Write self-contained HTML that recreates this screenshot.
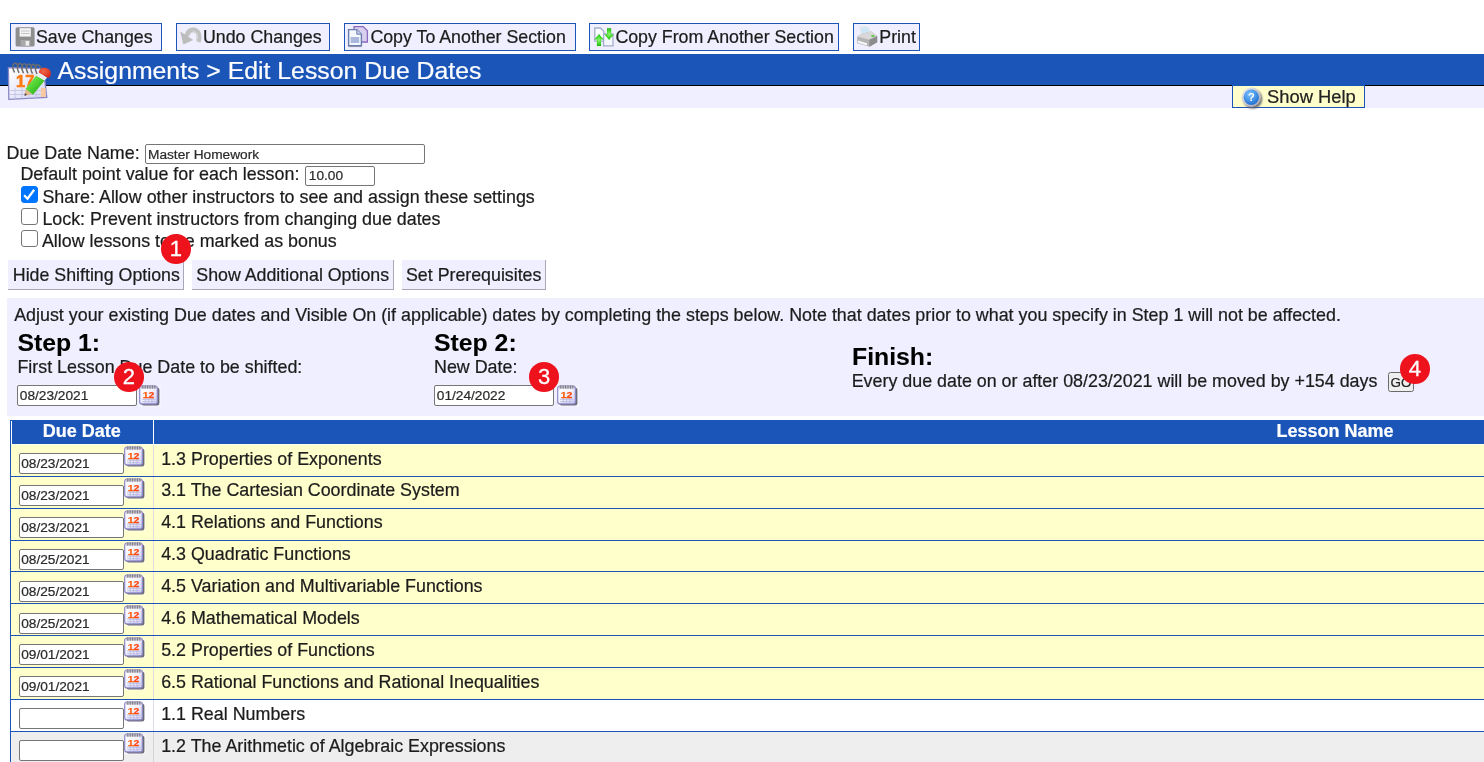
<!DOCTYPE html>
<html><head><meta charset="utf-8"><title>Edit Lesson Due Dates</title>
<style>
html,body{margin:0;padding:0;}
body{width:1484px;height:762px;overflow:hidden;background:#fff;position:relative;will-change:transform;font-family:"Liberation Sans",Arial,sans-serif;font-size:17.875px;color:#1c1c1c;-webkit-text-stroke-width:.22px;}
.a{position:absolute;white-space:nowrap;line-height:20px;}
.tb{position:absolute;top:23px;height:26px;border:1px solid #1b55b8;background:#efefff;}
.tb span{position:absolute;top:3px;font-size:17.8px;line-height:20px;white-space:nowrap;color:#1c1c1c;}
.tb svg{position:absolute;left:0;top:0;overflow:visible;}
#bar{position:absolute;left:0;top:54px;width:1484px;height:31px;background:#1b55b8;border-bottom:1px solid #000;}
#bar2{position:absolute;left:0;top:86px;width:1484px;height:22px;background:#efefff;}
#title{position:absolute;left:57.5px;top:57px;font-size:24.8px;line-height:28px;color:#fff;white-space:nowrap;}
.inp{position:absolute;box-sizing:border-box;border:1px solid #767676;border-radius:2px;background:#fff;font-size:13.7px;line-height:16px;padding:2px 0 0 1.2px;white-space:nowrap;color:#2a2a2a;height:20.5px;}
.btn{position:absolute;top:260px;height:30px;box-sizing:border-box;background:#efefff;border-right:1px solid #a8a8b4;border-bottom:1px solid #a8a8b4;font-size:17.8px;line-height:20px;padding-top:5px;white-space:nowrap;}
.cb{position:absolute;width:16.5px;height:16.5px;box-sizing:border-box;border:1.3px solid #767676;border-radius:3px;background:#fff;}
.badge{position:absolute;width:30.500px;height:30px;border-radius:50%;background:#ee121c;color:#fff;font-size:22px;line-height:29.600px;text-align:center;-webkit-text-stroke:.3px #fff;}
#shift{position:absolute;left:7px;top:298px;width:1477px;height:118px;background:#efefff;}
.h{font-weight:bold;font-size:24.8px;line-height:28px;color:#000;-webkit-text-stroke-width:.08px;}
#tbl{position:absolute;left:10px;top:420px;width:1474px;height:342px;background:#1b55b8;}
.c{position:absolute;}
.th{position:absolute;color:#fff;font-weight:bold;font-size:18px;line-height:20px;white-space:nowrap;}
.rt{position:absolute;left:161.2px;line-height:20px;white-space:nowrap;font-size:17.86px;color:#1c1c1c;}
.cal{position:absolute;overflow:visible;}
</style></head><body>

<svg width="0" height="0" style="position:absolute">
<defs>
<linearGradient id="cg" x1="0" y1="0" x2="1" y2="1"><stop offset="0" stop-color="#ffffff"/><stop offset=".45" stop-color="#f4f4ff"/><stop offset="1" stop-color="#ccccf2"/></linearGradient>
<filter id="sh" x="-20%" y="-20%" width="150%" height="150%"><feGaussianBlur stdDeviation="0.7"/></filter>
<linearGradient id="og" x1="0" y1="0" x2="1" y2="0"><stop offset="0" stop-color="#ff7410"/><stop offset="1" stop-color="#ff3410"/></linearGradient>
</defs></svg>

<div class="tb" style="left:10px;width:150px;"><svg width="26" height="26"><g transform="translate(-11,-24)">
<rect x="15.6" y="27.2" width="19" height="19.4" rx="1.5" fill="#8e8e8e"/>
<rect x="19.6" y="28.2" width="11.2" height="8.4" fill="#f4f4f4"/>
<path d="M21 31h8.5M21 33.5h8.5" stroke="#c4c4c4" stroke-width="1"/>
<rect x="20.6" y="40" width="9.6" height="6.6" fill="#a9a9a9"/>
<rect x="25.6" y="41" width="3.6" height="4.6" fill="#f0f0f0"/>
</g></svg><span id="tb0" style="left:25px;">Save Changes</span></div>
<div class="tb" style="left:176px;width:152px;"><svg width="26" height="26"><g transform="translate(-177,-24)">
<path d="M198.200 41.800 C200.800 35 197.600 29.600 192.600 29.900 C189.600 30.100 187.800 32.500 186.600 36" fill="none" stroke="#c2c2c2" stroke-width="4.800"/>
<path d="M180.300 31.400 L193.200 40 L183.300 44.600 Z" fill="#bcbcbc"/>
<path d="M196.600 41 C198.600 35.500 196.500 31.600 192.600 31.600" fill="none" stroke="#d8d8d8" stroke-width="1.400"/>
</g></svg><span id="tb1" style="left:26px;">Undo Changes</span></div>
<div class="tb" style="left:344px;width:230px;"><svg width="26" height="26"><g transform="translate(-345,-24)">
<path d="M354 26.6h9.2l4.2 4.2v11.2h-13.4z" fill="#d9d0f0" stroke="#8a68c0" stroke-width="1.3"/>
<path d="M348.6 29.6h8.2l4.6 4.6v11.4h-12.8z" fill="#f4f8ff" stroke="#6a7cab" stroke-width="1.4"/>
<rect x="350.6" y="37" width="8.6" height="6" fill="#a9b8dc"/>
<path d="M356.8 29.6v4.6h4.6" fill="#c4d0ec" stroke="#6a7cab" stroke-width="1"/>
<path d="M348.4 46.6h13.2" stroke="#5a607c" stroke-width="1" opacity=".6"/>
</g></svg><span id="tb2" style="left:25.4px;">Copy To Another Section</span></div>
<div class="tb" style="left:589px;width:248px;"><svg width="26" height="26"><defs><radialGradient id="gg" cx=".5" cy=".5" r=".6"><stop offset="0" stop-color="#90f870"/><stop offset=".6" stop-color="#38d020"/><stop offset="1" stop-color="#109808"/></radialGradient></defs><g transform="translate(-590,-24)">
<path d="M594.800 28h5.600l3.400 3.400v9.800h-9z" fill="#fafcff" stroke="#a4aecb" stroke-width="1.300"/>
<path d="M603.600 34h9.400v11.800h-9.400z" fill="#f4f8fc" stroke="#a4aecb" stroke-width="1.300"/>
<path d="M599 34l4.600 5.600h-2.500v6.400h-4.200v-6.400h-2.500z" fill="url(#gg)"/>
<path d="M609.100 40l-4.600-5.600h2.500v-6.200h4.200v6.200h2.500z" fill="url(#gg)"/>
</g></svg><span id="tb3" style="left:25.4px;">Copy From Another Section</span></div>
<div class="tb" style="left:853px;width:65px;"><svg width="26" height="26"><g transform="translate(-854,-24)">
<path d="M859.5 27.2l7.8-.8 4 6.4-9 2.6z" fill="#cfe6f8" stroke="#e8e8e8" stroke-width="1.2"/>
<path d="M857.2 36.4l4.6-2.6 9.6-2.4 5.8 4.6v6.2l-7.6 4.6-12.4-3.6z" fill="#b4b4b4"/>
<path d="M857.2 36.4l12.2 3.4 7.8-3.8-5.8-4.6-9.6 2.4z" fill="#d8d8d8"/>
<path d="M858 40.6l9 2.6v2.2l-9-2.6z" fill="#f6f6f6"/>
<path d="M869.4 39.8v7l7.8-4.6v-6.2z" fill="#8c8c8c"/>
<rect x="871.4" y="35.2" width="3" height="1.6" fill="#48c030"/>
</g></svg><span id="tb4" style="left:25.3px;">Print</span></div>
<div id="bar"></div><div id="bar2"></div>
<div id="title">Assignments &gt; Edit Lesson Due Dates</div>
<svg class="cal" style="left:6px;top:60px" width="48" height="42" viewBox="6 60 48 42">
<defs><linearGradient id="tg" x1="0" y1="0" x2="1" y2="1"><stop offset="0" stop-color="#ffffff"/><stop offset="1" stop-color="#d4d4f4"/></linearGradient>
<linearGradient id="pg" x1="0" y1="0" x2="1" y2="1"><stop offset="0" stop-color="#90f468"/><stop offset=".5" stop-color="#4cd030"/><stop offset="1" stop-color="#1c9810"/></linearGradient>
<radialGradient id="eg" cx=".4" cy=".35" r=".7"><stop offset="0" stop-color="#f06848"/><stop offset="1" stop-color="#d82818"/></radialGradient></defs>
<path d="M8.4 67.600l35 1 3.400 28.800-38 2z" fill="url(#tg)" stroke="#8a88c4" stroke-width="1.300"/>
<path d="M9 90.500h37M9.200 94.500h37M15 88v10.500M22 88v10.500M29 88v10.500M36 88v10.500" stroke="#c4c4e4" stroke-width=".9"/>
<rect x="41" y="88" width="4.600" height="9" fill="#f8c8a0"/>
<text x="16" y="87.200" font-family="Liberation Sans, Arial, sans-serif" font-weight="bold" font-size="16.500" fill="#ff7c14" stroke="#ff7c14" stroke-width=".7">17</text>
<g fill="none" stroke="#6c6c6c" stroke-width="1.500"><path d="M14.500 72.500c-4.500-9 2-13 4-5M19 72.800c-4.500-9 2-13 4-5M23.500 73.100c-4.500-9 2-13 4-5M28 73.400c-4.500-9 2-13 4-5M32.500 73.700c-4.500-9 2-13 4-5M37 74c-4.500-9 2-13 4-5"/></g>
<path d="M24.400 95.800l1.400-7 6 5.400z" fill="#e4b888"/><path d="M24.400 95.800l.6-2.800 2 2z" fill="#3c3c3c"/>
<path d="M25.600 88.800l10.600-13.200 8.400 4.800-11.600 14.400z" fill="url(#pg)"/>
<path d="M36.200 75.600l2.600-3 8.400 5-2.600 2.800z" fill="#ececec"/>
<path d="M38.800 72.600c0-7 12.500-6.500 12 1.500-.2 3.200-1.800 3.800-3.600 3.500z" fill="url(#eg)"/>
</svg>
<div class="a" style="left:1232px;top:85px;width:131px;height:21px;background:#ffffcc;border:1px solid #1b55b8;"></div>
<svg class="cal" style="left:1240px;top:85.800px" width="24" height="24" viewBox="0 0 24 24">
<defs><radialGradient id="hg" cx=".4" cy=".3" r=".8"><stop offset="0" stop-color="#7cc4ff"/><stop offset="1" stop-color="#1868d0"/></radialGradient>
<linearGradient id="hr" x1="0" y1="0" x2="1" y2="1"><stop offset="0" stop-color="#f0f0f2"/><stop offset="1" stop-color="#a4a4ac"/></linearGradient>
<filter id="hs" x="-30%" y="-30%" width="160%" height="160%"><feGaussianBlur stdDeviation="0.900"/></filter></defs>
<circle cx="12.800" cy="13" r="9.400" fill="#66666e" filter="url(#hs)"/>
<circle cx="11.300" cy="11.200" r="9.700" fill="url(#hr)"/>
<circle cx="11.300" cy="11.200" r="7.700" fill="url(#hg)"/>
<text x="11.300" y="15.200" text-anchor="middle" font-family="Liberation Sans, Arial, sans-serif" font-weight="bold" font-size="11" fill="#fff">?</text>
</svg>
<div class="a" id="showhelp" style="left:1267.1px;top:86.6px;font-size:18.35px;color:#222;">Show Help</div>
<div class="a" id="t_ddn" style="left:6.6px;top:143px;">Due Date Name:</div>
<div class="inp" id="i_name" style="left:145px;top:144px;width:280px;height:20px;padding-left:2px">Master Homework</div>
<div class="a" id="t_def" style="left:20.4px;top:164px;">Default point value for each lesson:</div>
<div class="inp" id="i_pts" style="left:305px;top:166px;width:70px;height:20px;padding:1px 0 0 2.8px">10.00</div>
<div class="cb" style="left:21px;top:186px;background:#0075ff;border-color:#0075ff;"><svg width="17" height="17" style="position:absolute;left:-1.3px;top:-1.3px"><path d="M3.100 9.300L6.500 12.800L13.200 3.700" fill="none" stroke="#fff" stroke-width="2.300"/></svg></div>
<div class="a" id="t_share" style="left:42.4px;top:187px;">Share: Allow other instructors to see and assign these settings</div>
<div class="cb" style="left:21px;top:208px;"></div>
<div class="a" id="t_lock" style="left:42.4px;top:209px;">Lock: Prevent instructors from changing due dates</div>
<div class="cb" style="left:21px;top:230px;"></div>
<div class="a" id="t_allow" style="left:41.9px;top:231px;">Allow lessons to be marked as bonus</div>
<div class="btn" id="b1" style="left:8px;width:176px;padding-left:4.800px;">Hide Shifting Options</div>
<div class="btn" id="b2" style="left:192px;width:202px;padding-left:4.300px;">Show Additional Options</div>
<div class="btn" id="b3" style="left:402px;width:144px;padding-left:4px;">Set Prerequisites</div>
<div id="shift"></div>
<div class="a" id="t_adj" style="left:14.2px;top:305px;">Adjust your existing Due dates and Visible On (if applicable) dates by completing the steps below. Note that dates prior to what you specify in Step 1 will not be affected.</div>
<div class="a h" id="t_s1" style="left:17.4px;top:329px;">Step 1:</div>
<div class="a" id="t_first" style="left:17.4px;top:356.500px;">First Lesson Due Date to be shifted:</div>
<div class="inp" id="i_s1" style="left:17px;top:385px;width:120px;padding-left:1.8px">08/23/2021</div>
<svg class="cal" style="left:139px;top:384.5px" width="24" height="24" viewBox="0 0 24 24"><rect x="0" y="0.5" width="22" height="21.5" fill="#fff" opacity=".3"/>
<rect x="2.4" y="2.4" width="18" height="18.2" rx="2.5" fill="#6c6c78" filter="url(#sh)"/>
<rect x="0.7" y="1" width="17.6" height="17.9" rx="2.2" fill="url(#cg)" stroke="#8c88c8" stroke-width="1.2"/>
<rect x="2" y="0.8" width="15.2" height="2.8" fill="#b4b2c0" opacity=".8"/>
<path d="M3.8 0.3v3.4M6.2 0.3v3.4M8.6 0.3v3.4M11 0.3v3.4M13.4 0.3v3.4M15.8 0.3v3.4" stroke="#5c5c66" stroke-width="0.7"/>
<path d="M3 14.3h13.4M3 16.7h13.400M6.3 13.3v5M9.6 13.3v5M12.9 13.3v5" stroke="#b8b8e0" stroke-width="0.8"/>
<text x="9.6" y="12.8" text-anchor="middle" font-family="Liberation Sans, Arial, sans-serif" font-weight="bold" font-size="9.2" fill="url(#og)" stroke="#ff5410" stroke-width=".25" textLength="11.5" lengthAdjust="spacingAndGlyphs">12</text></svg>
<div class="a h" id="t_s2" style="left:434px;top:329px;">Step 2:</div>
<div class="a" id="t_new" style="left:434px;top:356.500px;">New Date:</div>
<div class="inp" id="i_s2" style="left:434px;top:385px;width:120px;padding-left:1.8px">01/24/2022</div>
<svg class="cal" style="left:556.5px;top:384.5px" width="24" height="24" viewBox="0 0 24 24"><rect x="0" y="0.5" width="22" height="21.5" fill="#fff" opacity=".3"/>
<rect x="2.4" y="2.4" width="18" height="18.2" rx="2.5" fill="#6c6c78" filter="url(#sh)"/>
<rect x="0.7" y="1" width="17.6" height="17.9" rx="2.2" fill="url(#cg)" stroke="#8c88c8" stroke-width="1.2"/>
<rect x="2" y="0.8" width="15.2" height="2.8" fill="#b4b2c0" opacity=".8"/>
<path d="M3.8 0.3v3.4M6.2 0.3v3.4M8.6 0.3v3.4M11 0.3v3.4M13.4 0.3v3.4M15.8 0.3v3.4" stroke="#5c5c66" stroke-width="0.7"/>
<path d="M3 14.3h13.4M3 16.7h13.400M6.3 13.3v5M9.6 13.3v5M12.9 13.3v5" stroke="#b8b8e0" stroke-width="0.8"/>
<text x="9.6" y="12.8" text-anchor="middle" font-family="Liberation Sans, Arial, sans-serif" font-weight="bold" font-size="9.2" fill="url(#og)" stroke="#ff5410" stroke-width=".25" textLength="11.5" lengthAdjust="spacingAndGlyphs">12</text></svg>
<div class="a h" id="t_fin" style="left:852px;top:343px;">Finish:</div>
<div class="a" id="t_every" style="left:851.700px;top:370.500px;">Every due date on or after 08/23/2021 will be moved by +154 days</div>
<div class="a" id="go" style="left:1388px;top:372px;width:26px;height:20px;box-sizing:border-box;border:1px solid #6a6a6a;border-radius:2.500px;background:#efefef;font-size:13.400px;line-height:19.400px;text-align:center;color:#222;">GO</div>
<div id="tbl"></div>
<div class="c" style="left:11px;top:421px;width:1px;height:23px;background:#fff"></div>
<div class="c" style="left:153px;top:420px;width:1px;height:24px;background:#fff"></div>
<div class="th" id="th1" style="left:42.800px;top:420.500px;">Due Date</div>
<div class="th" id="th2" style="left:1276.400px;top:420.500px;">Lesson Name</div>
<div class="c" style="left:11px;top:444px;width:1473px;height:32px;background:#ffffcc"></div>
<div class="c" style="left:153px;top:444px;width:1px;height:32px;background:#e2dce0"></div>
<div class="inp" id="ir0" style="left:19px;top:453px;width:105px;">08/23/2021</div>
<svg class="cal" style="left:124px;top:445.9px" width="24" height="24" viewBox="0 0 24 24"><rect x="0" y="0.5" width="22" height="21.5" fill="#fff" opacity=".3"/>
<rect x="2.4" y="2.4" width="18" height="18.2" rx="2.5" fill="#6c6c78" filter="url(#sh)"/>
<rect x="0.7" y="1" width="17.6" height="17.9" rx="2.2" fill="url(#cg)" stroke="#8c88c8" stroke-width="1.2"/>
<rect x="2" y="0.8" width="15.2" height="2.8" fill="#b4b2c0" opacity=".8"/>
<path d="M3.8 0.3v3.4M6.2 0.3v3.4M8.6 0.3v3.4M11 0.3v3.4M13.4 0.3v3.4M15.8 0.3v3.4" stroke="#5c5c66" stroke-width="0.7"/>
<path d="M3 14.3h13.4M3 16.7h13.400M6.3 13.3v5M9.6 13.3v5M12.9 13.3v5" stroke="#b8b8e0" stroke-width="0.8"/>
<text x="9.6" y="12.8" text-anchor="middle" font-family="Liberation Sans, Arial, sans-serif" font-weight="bold" font-size="9.2" fill="url(#og)" stroke="#ff5410" stroke-width=".25" textLength="11.5" lengthAdjust="spacingAndGlyphs">12</text></svg>
<div class="rt" id="r0" style="top:449px;">1.3 Properties of Exponents</div>
<div class="c" style="left:11px;top:477px;width:1473px;height:31px;background:#ffffcc"></div>
<div class="c" style="left:153px;top:477px;width:1px;height:31px;background:#e2dce0"></div>
<div class="inp" id="ir1" style="left:19px;top:485px;width:105px;">08/23/2021</div>
<svg class="cal" style="left:124px;top:477.8px" width="24" height="24" viewBox="0 0 24 24"><rect x="0" y="0.5" width="22" height="21.5" fill="#fff" opacity=".3"/>
<rect x="2.4" y="2.4" width="18" height="18.2" rx="2.5" fill="#6c6c78" filter="url(#sh)"/>
<rect x="0.7" y="1" width="17.6" height="17.9" rx="2.2" fill="url(#cg)" stroke="#8c88c8" stroke-width="1.2"/>
<rect x="2" y="0.8" width="15.2" height="2.8" fill="#b4b2c0" opacity=".8"/>
<path d="M3.8 0.3v3.4M6.2 0.3v3.4M8.6 0.3v3.4M11 0.3v3.4M13.4 0.3v3.4M15.8 0.3v3.4" stroke="#5c5c66" stroke-width="0.7"/>
<path d="M3 14.3h13.4M3 16.7h13.400M6.3 13.3v5M9.6 13.3v5M12.9 13.3v5" stroke="#b8b8e0" stroke-width="0.8"/>
<text x="9.6" y="12.8" text-anchor="middle" font-family="Liberation Sans, Arial, sans-serif" font-weight="bold" font-size="9.2" fill="url(#og)" stroke="#ff5410" stroke-width=".25" textLength="11.5" lengthAdjust="spacingAndGlyphs">12</text></svg>
<div class="rt" id="r1" style="top:480px;">3.1 The Cartesian Coordinate System</div>
<div class="c" style="left:11px;top:509px;width:1473px;height:31px;background:#ffffcc"></div>
<div class="c" style="left:153px;top:509px;width:1px;height:31px;background:#e2dce0"></div>
<div class="inp" id="ir2" style="left:19px;top:517px;width:105px;">08/23/2021</div>
<svg class="cal" style="left:124px;top:509.7px" width="24" height="24" viewBox="0 0 24 24"><rect x="0" y="0.5" width="22" height="21.5" fill="#fff" opacity=".3"/>
<rect x="2.4" y="2.4" width="18" height="18.2" rx="2.5" fill="#6c6c78" filter="url(#sh)"/>
<rect x="0.7" y="1" width="17.6" height="17.9" rx="2.2" fill="url(#cg)" stroke="#8c88c8" stroke-width="1.2"/>
<rect x="2" y="0.8" width="15.2" height="2.8" fill="#b4b2c0" opacity=".8"/>
<path d="M3.8 0.3v3.4M6.2 0.3v3.4M8.6 0.3v3.4M11 0.3v3.4M13.4 0.3v3.4M15.8 0.3v3.4" stroke="#5c5c66" stroke-width="0.7"/>
<path d="M3 14.3h13.4M3 16.7h13.400M6.3 13.3v5M9.6 13.3v5M12.9 13.3v5" stroke="#b8b8e0" stroke-width="0.8"/>
<text x="9.6" y="12.8" text-anchor="middle" font-family="Liberation Sans, Arial, sans-serif" font-weight="bold" font-size="9.2" fill="url(#og)" stroke="#ff5410" stroke-width=".25" textLength="11.5" lengthAdjust="spacingAndGlyphs">12</text></svg>
<div class="rt" id="r2" style="top:512px;">4.1 Relations and Functions</div>
<div class="c" style="left:11px;top:541px;width:1473px;height:30px;background:#ffffcc"></div>
<div class="c" style="left:153px;top:541px;width:1px;height:30px;background:#e2dce0"></div>
<div class="inp" id="ir3" style="left:19px;top:549px;width:105px;">08/25/2021</div>
<svg class="cal" style="left:124px;top:541.6px" width="24" height="24" viewBox="0 0 24 24"><rect x="0" y="0.5" width="22" height="21.5" fill="#fff" opacity=".3"/>
<rect x="2.4" y="2.4" width="18" height="18.2" rx="2.5" fill="#6c6c78" filter="url(#sh)"/>
<rect x="0.7" y="1" width="17.6" height="17.9" rx="2.2" fill="url(#cg)" stroke="#8c88c8" stroke-width="1.2"/>
<rect x="2" y="0.8" width="15.2" height="2.8" fill="#b4b2c0" opacity=".8"/>
<path d="M3.8 0.3v3.4M6.2 0.3v3.4M8.6 0.3v3.4M11 0.3v3.4M13.4 0.3v3.4M15.8 0.3v3.4" stroke="#5c5c66" stroke-width="0.7"/>
<path d="M3 14.3h13.4M3 16.7h13.400M6.3 13.3v5M9.6 13.3v5M12.9 13.3v5" stroke="#b8b8e0" stroke-width="0.8"/>
<text x="9.6" y="12.8" text-anchor="middle" font-family="Liberation Sans, Arial, sans-serif" font-weight="bold" font-size="9.2" fill="url(#og)" stroke="#ff5410" stroke-width=".25" textLength="11.5" lengthAdjust="spacingAndGlyphs">12</text></svg>
<div class="rt" id="r3" style="top:544px;">4.3 Quadratic Functions</div>
<div class="c" style="left:11px;top:572px;width:1473px;height:31px;background:#ffffcc"></div>
<div class="c" style="left:153px;top:572px;width:1px;height:31px;background:#e2dce0"></div>
<div class="inp" id="ir4" style="left:19px;top:581px;width:105px;">08/25/2021</div>
<svg class="cal" style="left:124px;top:573.5px" width="24" height="24" viewBox="0 0 24 24"><rect x="0" y="0.5" width="22" height="21.5" fill="#fff" opacity=".3"/>
<rect x="2.4" y="2.4" width="18" height="18.2" rx="2.5" fill="#6c6c78" filter="url(#sh)"/>
<rect x="0.7" y="1" width="17.6" height="17.9" rx="2.2" fill="url(#cg)" stroke="#8c88c8" stroke-width="1.2"/>
<rect x="2" y="0.8" width="15.2" height="2.8" fill="#b4b2c0" opacity=".8"/>
<path d="M3.8 0.3v3.4M6.2 0.3v3.4M8.6 0.3v3.4M11 0.3v3.4M13.4 0.3v3.4M15.8 0.3v3.4" stroke="#5c5c66" stroke-width="0.7"/>
<path d="M3 14.3h13.4M3 16.7h13.400M6.3 13.3v5M9.6 13.3v5M12.9 13.3v5" stroke="#b8b8e0" stroke-width="0.8"/>
<text x="9.6" y="12.8" text-anchor="middle" font-family="Liberation Sans, Arial, sans-serif" font-weight="bold" font-size="9.2" fill="url(#og)" stroke="#ff5410" stroke-width=".25" textLength="11.5" lengthAdjust="spacingAndGlyphs">12</text></svg>
<div class="rt" id="r4" style="top:576px;">4.5 Variation and Multivariable Functions</div>
<div class="c" style="left:11px;top:604px;width:1473px;height:31px;background:#ffffcc"></div>
<div class="c" style="left:153px;top:604px;width:1px;height:31px;background:#e2dce0"></div>
<div class="inp" id="ir5" style="left:19px;top:613px;width:105px;">08/25/2021</div>
<svg class="cal" style="left:124px;top:605.4px" width="24" height="24" viewBox="0 0 24 24"><rect x="0" y="0.5" width="22" height="21.5" fill="#fff" opacity=".3"/>
<rect x="2.4" y="2.4" width="18" height="18.2" rx="2.5" fill="#6c6c78" filter="url(#sh)"/>
<rect x="0.7" y="1" width="17.6" height="17.9" rx="2.2" fill="url(#cg)" stroke="#8c88c8" stroke-width="1.2"/>
<rect x="2" y="0.8" width="15.2" height="2.8" fill="#b4b2c0" opacity=".8"/>
<path d="M3.8 0.3v3.4M6.2 0.3v3.4M8.6 0.3v3.4M11 0.3v3.4M13.4 0.3v3.4M15.8 0.3v3.4" stroke="#5c5c66" stroke-width="0.7"/>
<path d="M3 14.3h13.4M3 16.7h13.400M6.3 13.3v5M9.6 13.3v5M12.9 13.3v5" stroke="#b8b8e0" stroke-width="0.8"/>
<text x="9.6" y="12.8" text-anchor="middle" font-family="Liberation Sans, Arial, sans-serif" font-weight="bold" font-size="9.2" fill="url(#og)" stroke="#ff5410" stroke-width=".25" textLength="11.5" lengthAdjust="spacingAndGlyphs">12</text></svg>
<div class="rt" id="r5" style="top:608px;">4.6 Mathematical Models</div>
<div class="c" style="left:11px;top:636px;width:1473px;height:31px;background:#ffffcc"></div>
<div class="c" style="left:153px;top:636px;width:1px;height:31px;background:#e2dce0"></div>
<div class="inp" id="ir6" style="left:19px;top:644px;width:105px;">09/01/2021</div>
<svg class="cal" style="left:124px;top:637.3px" width="24" height="24" viewBox="0 0 24 24"><rect x="0" y="0.5" width="22" height="21.5" fill="#fff" opacity=".3"/>
<rect x="2.4" y="2.4" width="18" height="18.2" rx="2.5" fill="#6c6c78" filter="url(#sh)"/>
<rect x="0.7" y="1" width="17.6" height="17.9" rx="2.2" fill="url(#cg)" stroke="#8c88c8" stroke-width="1.2"/>
<rect x="2" y="0.8" width="15.2" height="2.8" fill="#b4b2c0" opacity=".8"/>
<path d="M3.8 0.3v3.4M6.2 0.3v3.4M8.6 0.3v3.4M11 0.3v3.4M13.4 0.3v3.4M15.8 0.3v3.4" stroke="#5c5c66" stroke-width="0.7"/>
<path d="M3 14.3h13.4M3 16.7h13.400M6.3 13.3v5M9.6 13.3v5M12.9 13.3v5" stroke="#b8b8e0" stroke-width="0.8"/>
<text x="9.6" y="12.8" text-anchor="middle" font-family="Liberation Sans, Arial, sans-serif" font-weight="bold" font-size="9.2" fill="url(#og)" stroke="#ff5410" stroke-width=".25" textLength="11.5" lengthAdjust="spacingAndGlyphs">12</text></svg>
<div class="rt" id="r6" style="top:640px;">5.2 Properties of Functions</div>
<div class="c" style="left:11px;top:668px;width:1473px;height:31px;background:#ffffcc"></div>
<div class="c" style="left:153px;top:668px;width:1px;height:31px;background:#e2dce0"></div>
<div class="inp" id="ir7" style="left:19px;top:676px;width:105px;">09/01/2021</div>
<svg class="cal" style="left:124px;top:669.2px" width="24" height="24" viewBox="0 0 24 24"><rect x="0" y="0.5" width="22" height="21.5" fill="#fff" opacity=".3"/>
<rect x="2.4" y="2.4" width="18" height="18.2" rx="2.5" fill="#6c6c78" filter="url(#sh)"/>
<rect x="0.7" y="1" width="17.6" height="17.9" rx="2.2" fill="url(#cg)" stroke="#8c88c8" stroke-width="1.2"/>
<rect x="2" y="0.8" width="15.2" height="2.8" fill="#b4b2c0" opacity=".8"/>
<path d="M3.8 0.3v3.4M6.2 0.3v3.4M8.6 0.3v3.4M11 0.3v3.4M13.4 0.3v3.4M15.8 0.3v3.4" stroke="#5c5c66" stroke-width="0.7"/>
<path d="M3 14.3h13.4M3 16.7h13.400M6.3 13.3v5M9.6 13.3v5M12.9 13.3v5" stroke="#b8b8e0" stroke-width="0.8"/>
<text x="9.6" y="12.8" text-anchor="middle" font-family="Liberation Sans, Arial, sans-serif" font-weight="bold" font-size="9.2" fill="url(#og)" stroke="#ff5410" stroke-width=".25" textLength="11.5" lengthAdjust="spacingAndGlyphs">12</text></svg>
<div class="rt" id="r7" style="top:672px;">6.5 Rational Functions and Rational Inequalities</div>
<div class="c" style="left:11px;top:700px;width:1473px;height:31px;background:#ffffff"></div>
<div class="c" style="left:153px;top:700px;width:1px;height:31px;background:#dcdce4"></div>
<div class="inp" id="ir8" style="left:19px;top:708px;width:105px;"></div>
<svg class="cal" style="left:124px;top:701.1px" width="24" height="24" viewBox="0 0 24 24"><rect x="0" y="0.5" width="22" height="21.5" fill="#fff" opacity=".3"/>
<rect x="2.4" y="2.4" width="18" height="18.2" rx="2.5" fill="#6c6c78" filter="url(#sh)"/>
<rect x="0.7" y="1" width="17.6" height="17.9" rx="2.2" fill="url(#cg)" stroke="#8c88c8" stroke-width="1.2"/>
<rect x="2" y="0.8" width="15.2" height="2.8" fill="#b4b2c0" opacity=".8"/>
<path d="M3.8 0.3v3.4M6.2 0.3v3.4M8.6 0.3v3.4M11 0.3v3.4M13.4 0.3v3.4M15.8 0.3v3.4" stroke="#5c5c66" stroke-width="0.7"/>
<path d="M3 14.3h13.4M3 16.7h13.400M6.3 13.3v5M9.6 13.3v5M12.9 13.3v5" stroke="#b8b8e0" stroke-width="0.8"/>
<text x="9.6" y="12.8" text-anchor="middle" font-family="Liberation Sans, Arial, sans-serif" font-weight="bold" font-size="9.2" fill="url(#og)" stroke="#ff5410" stroke-width=".25" textLength="11.5" lengthAdjust="spacingAndGlyphs">12</text></svg>
<div class="rt" id="r8" style="top:704px;">1.1 Real Numbers</div>
<div class="c" style="left:11px;top:732px;width:1473px;height:31px;background:#eeeeee"></div>
<div class="c" style="left:153px;top:732px;width:1px;height:31px;background:#d4d4d8"></div>
<div class="inp" id="ir9" style="left:19px;top:740px;width:105px;"></div>
<svg class="cal" style="left:124px;top:733px" width="24" height="24" viewBox="0 0 24 24"><rect x="0" y="0.5" width="22" height="21.5" fill="#fff" opacity=".3"/>
<rect x="2.4" y="2.4" width="18" height="18.2" rx="2.5" fill="#6c6c78" filter="url(#sh)"/>
<rect x="0.7" y="1" width="17.6" height="17.9" rx="2.2" fill="url(#cg)" stroke="#8c88c8" stroke-width="1.2"/>
<rect x="2" y="0.8" width="15.2" height="2.8" fill="#b4b2c0" opacity=".8"/>
<path d="M3.8 0.3v3.4M6.2 0.3v3.4M8.6 0.3v3.4M11 0.3v3.4M13.4 0.3v3.4M15.8 0.3v3.4" stroke="#5c5c66" stroke-width="0.7"/>
<path d="M3 14.3h13.4M3 16.7h13.400M6.3 13.3v5M9.6 13.3v5M12.9 13.3v5" stroke="#b8b8e0" stroke-width="0.8"/>
<text x="9.6" y="12.8" text-anchor="middle" font-family="Liberation Sans, Arial, sans-serif" font-weight="bold" font-size="9.2" fill="url(#og)" stroke="#ff5410" stroke-width=".25" textLength="11.5" lengthAdjust="spacingAndGlyphs">12</text></svg>
<div class="rt" id="r9" style="top:736px;">1.2 The Arithmetic of Algebraic Expressions</div>
<div class="c" style="left:12px;top:444px;width:1472px;height:1px;background:#fffff0"></div>
<div class="badge" id="bd1" style="left:160.700px;top:234.300px;">1</div>
<div class="badge" id="bd2" style="left:113.700px;top:361.600px;">2</div>
<div class="badge" id="bd3" style="left:528.800px;top:362.300px;">3</div>
<div class="badge" id="bd4" style="left:1399.700px;top:353.600px;">4</div>
</body></html>
